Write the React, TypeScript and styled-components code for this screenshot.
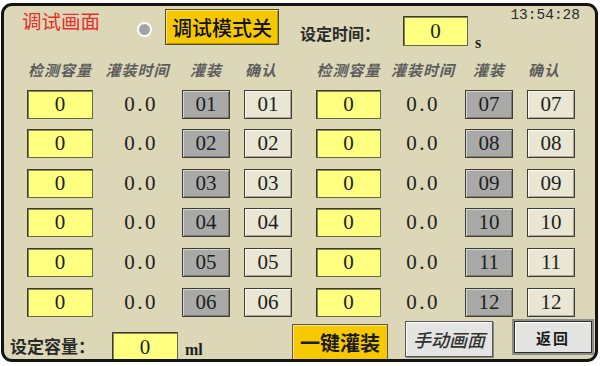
import React from "react";
import styled, { createGlobalStyle } from "styled-components";

const palette = {
  panel: "#dbd7b7",
  frame: "#141414",
  yellow: "#ffff80",
  amber: "#f5c800",
  key: "#a9aaa7",
  paper: "#e9e6d3",
  button: "#e4e4e2",
  ink: "#1e1e1e",
  label: "#5c5c5c",
  red: "#e5302c",
};

const cjk = `"Noto Sans CJK SC", "Liberation Sans", sans-serif`;
const serif = `"Liberation Serif", "Noto Sans CJK SC", serif`;

const GlobalStyle = createGlobalStyle`
  body {
    margin: 0;
    background: #ffffff;
    font-family: ${cjk};
  }
`;

type Offsets = { $mt?: number; $ml?: number; $mb?: number };

const offsets = (p: Offsets) => `
  margin-top: ${p.$mt ?? 0}px;
  margin-left: ${p.$ml ?? 0}px;
  margin-bottom: ${p.$mb ?? 0}px;
`;

const Screen = styled.div`
  box-sizing: border-box;
  width: 597px;
  height: 359px;
  margin: 3px 0 0 1px;
  border: 3px solid ${palette.frame};
  border-radius: 11px;
  background: ${palette.panel};
  display: flex;
  flex-direction: column;
  overflow: hidden;
  color: ${palette.ink};
`;

/* 상단 바 */
const TopBar = styled.div`
  display: flex;
  align-items: flex-start;
  height: 44px;
  padding-left: 18px;
  flex-shrink: 0;
  white-space: nowrap;
`;

const Title = styled.h1`
  margin: 2px 0 0;
  font-size: 19.5px;
  line-height: 26px;
  font-weight: 400;
  color: ${palette.red};
`;

const Lamp = styled.span`
  box-sizing: border-box;
  width: 15px;
  height: 15px;
  margin: 16px 0 0 37px;
  border: 2px solid #ffffff;
  border-radius: 50%;
  background: #a2a4a6;
  flex-shrink: 0;
`;

const ModeButton = styled.button`
  box-sizing: border-box;
  width: 114px;
  height: 36px;
  margin: 3px 0 0 13px;
  padding: 0;
  border: 1px solid #4a4a3a;
  box-shadow: inset 1px 1px 0 #ffe680, inset -1px -1px 0 #b89600;
  background: ${palette.amber};
  font-family: ${cjk};
  font-size: 20px;
  font-weight: 500;
  color: #111;
`;

const SetLabel = styled.span<Offsets & { $size: number }>`
  ${offsets}
  font-size: ${(p) => p.$size}px;
  line-height: 20px;
  font-weight: 700;
  color: #2a2a2a;
`;

const Field = styled.div<Offsets & { $w: number; $h?: number }>`
  ${offsets}
  box-sizing: border-box;
  width: ${(p) => p.$w}px;
  height: ${(p) => p.$h ?? 29}px;
  display: flex;
  align-items: center;
  justify-content: center;
  background: ${palette.yellow};
  border: 1px solid #3a3a30;
  border-right-color: #66664a;
  border-bottom-color: #66664a;
  box-shadow: inset 1px 1px 0 #8a8a50;
  font-family: ${serif};
  font-size: 21px;
  flex-shrink: 0;
`;

const Unit = styled.span<Offsets>`
  ${offsets}
  font-family: ${serif};
  font-size: 16px;
  font-weight: 700;
  line-height: 14px;
`;

const Clock = styled.span`
  margin: 1px 15px 0 auto;
  font-family: "Liberation Mono", monospace;
  font-size: 14.5px;
  line-height: 16px;
  color: #2a2a2a;
`;

/* 표 */
const Table = styled.div`
  display: flex;
  gap: 24px;
  padding-left: 23px;
  margin-top: 11px;
`;

const Half = styled.div<{ $cols: string }>`
  display: grid;
  grid-template-columns: ${(p) => p.$cols};
  grid-template-rows: 18px;
  grid-auto-rows: 29px;
  row-gap: 10.6px;
  align-items: center;
`;

const HeadCell = styled.span`
  font-size: 15px;
  line-height: 18px;
  font-style: italic;
  font-weight: 700;
  color: ${palette.label};
  text-align: center;
  white-space: nowrap;
  letter-spacing: 1px;
`;

const Readout = styled.span<{ $nudge: number }>`
  padding-left: ${(p) => p.$nudge}px;
  font-family: ${serif};
  font-size: 21px;
  letter-spacing: 2.5px;
  text-align: center;
`;

const Tile = styled.div<{ $tone: "key" | "paper" }>`
  box-sizing: border-box;
  width: 48px;
  height: 29px;
  justify-self: ${(p) => (p.$tone === "paper" ? "end" : "start")};
  display: flex;
  align-items: center;
  justify-content: center;
  background: ${(p) => (p.$tone === "key" ? palette.key : palette.paper)};
  border: 1px solid #3c3c38;
  box-shadow: ${(p) =>
    p.$tone === "key"
      ? "inset 1px 1px 0 #d4d4d2, inset -1px -1px 0 #7a7a78"
      : "inset 1px 1px 0 #fbfaf0, inset -1px -1px 0 #a8a594"};
  font-family: ${serif};
  font-size: 21px;
`;

/* 하단 바 */
const BottomBar = styled.div`
  margin-top: auto;
  display: flex;
  align-items: flex-end;
  justify-content: space-between;
  padding: 0 1px 0 6px;
  white-space: nowrap;
`;

const Group = styled.div`
  display: flex;
  align-items: flex-end;
`;

const ActionButton = styled.button<{ $variant: "amber" | "plain" | "back" }>`
  box-sizing: border-box;
  height: 36px;
  padding: 0;
  font-family: ${cjk};
  color: #1a1a1a;
  background: ${(p) => (p.$variant === "amber" ? palette.amber : palette.button)};
  border: ${(p) => (p.$variant === "back" ? "2px solid #8c8c8a" : "1px solid #555")};
  box-shadow: ${(p) =>
    p.$variant === "back"
      ? "inset 0 0 0 1px #2c2c2c, inset 2px 2px 0 #ffffff"
      : p.$variant === "amber"
      ? "inset 1px 1px 0 #ffe680"
      : "inset 1px 1px 0 #ffffff, 1px 1px 0 #8a8a80"};
`;

const FillAll = styled(ActionButton)`
  width: 96px;
  margin-bottom: -1px;
  font-size: 20px;
  font-weight: 700;
`;

const Manual = styled(ActionButton)`
  width: 88px;
  margin: 0 0 2px 17px;
  font-size: 18px;
  font-style: italic;
  font-weight: 500;
  color: #333;
`;

const Back = styled(ActionButton)`
  width: 82px;
  margin: 0 0 4px 19px;
  font-size: 15px;
  font-weight: 700;
  letter-spacing: 2px;
`;

const headers = ["检测容量", "灌装时间", "灌装", "确认"];

const pad = (n: number) => String(n).padStart(2, "0");

const Column: React.FC<{ start: number; cols: string; fieldWidth: number; nudge: number }> = ({
  start,
  cols,
  fieldWidth,
  nudge,
}) => (
  <Half $cols={cols}>
    {headers.map((h) => (
      <HeadCell key={h}>{h}</HeadCell>
    ))}
    {Array.from({ length: 6 }, (_, i) => start + i).map((n) => (
      <React.Fragment key={n}>
        <Field $w={fieldWidth}>0</Field>
        <Readout $nudge={nudge}>0.0</Readout>
        <Tile $tone="key">{pad(n)}</Tile>
        <Tile $tone="paper">{pad(n)}</Tile>
      </React.Fragment>
    ))}
  </Half>
);

const App: React.FC = () => {
  return (
    <>
      <GlobalStyle />
      <Screen>
        <TopBar>
          <Title>调试画面</Title>
          <Lamp />
          <ModeButton>调试模式关</ModeButton>
          <SetLabel $size={16} $ml={21} $mt={17}>
            设定时间：
          </SetLabel>
          <Field $w={65} $h={30} $ml={23} $mt={10}>
            0
          </Field>
          <Unit $ml={7} $mt={30}>
            s
          </Unit>
          <Clock>13:54:28</Clock>
        </TopBar>

        <Table>
          <Column start={1} cols="66px 89px 48px 62px" fieldWidth={66} nudge={7} />
          <Column start={7} cols="65px 84px 48px 62px" fieldWidth={65} nudge={0} />
        </Table>

        <BottomBar>
          <Group>
            <SetLabel $size={17} $mb={3}>
              设定容量：
            </SetLabel>
            <Field $w={66} $h={30} $ml={17} $mb={-3}>
              0
            </Field>
            <Unit $ml={7} $mb={2}>
              ml
            </Unit>
          </Group>
          <Group>
            <FillAll $variant="amber">一键灌装</FillAll>
            <Manual $variant="plain">手动画面</Manual>
            <Back $variant="back">返回</Back>
          </Group>
        </BottomBar>
      </Screen>
    </>
  );
};

export default App;
